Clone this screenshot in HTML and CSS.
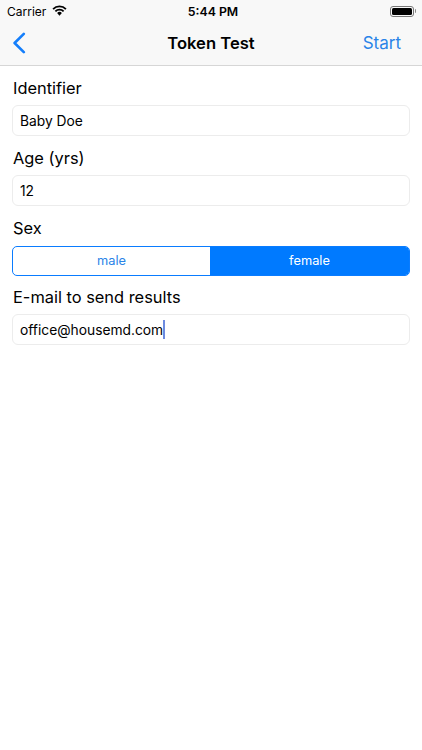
FILE: index.html
```html
<!DOCTYPE html>
<html lang="en">
<head>
<meta charset="utf-8">
<title>Token Test</title>
<link rel="stylesheet" href="styles.css">
</head>
<body>
<header class="chrome">
  <div class="status">
    <div class="status-left">
      <span>Carrier</span>
      <svg class="wifi" viewBox="0 0 16 12" width="15" height="11"><path d="M8 11.6 5.4 8.8a3.6 3.6 0 0 1 5.2 0Z" fill="#000"/><path d="M3.5 6.9a6.3 6.3 0 0 1 9 0" fill="none" stroke="#000" stroke-width="2"/><path d="M1 4.4a9.8 9.8 0 0 1 14 0" fill="none" stroke="#000" stroke-width="2"/></svg>
    </div>
    <div class="status-time">5:44 PM</div>
    <div class="status-right">
      <span class="battery"><span class="battery-fill"></span></span><span class="battery-cap"></span>
    </div>
  </div>
  <nav class="nav">
    <div class="nav-left">
      <svg class="back" viewBox="0 0 14 22" width="14" height="22"><path d="M11.8 1.8 2.6 11l9.2 9.2" fill="none" stroke="#147efb" stroke-width="2.6" stroke-linecap="round" stroke-linejoin="round"/></svg>
    </div>
    <h1 class="title">Token Test</h1>
    <div class="nav-right"><span class="start">Start</span></div>
  </nav>
</header>
<main class="form">
  <div class="label">Identifier</div>
  <div class="field">Baby Doe</div>
  <div class="label">Age (yrs)</div>
  <div class="field">12</div>
  <div class="label">Sex</div>
  <div class="segments">
    <div class="seg">male</div>
    <div class="seg seg-on">female</div>
  </div>
  <div class="label">E-mail to send results</div>
  <div class="field">office@housemd.com<span class="caret"></span></div>
</main>
</body>
</html>
```
FILE: styles.css
```css
* { box-sizing: border-box; }
html, body { margin: 0; padding: 0; }
body {
  width: 422px;
  height: 750px;
  overflow: hidden;
  background: #fff;
  color: #000;
  font-family: Inter, "Liberation Sans", sans-serif;
}
.chrome {
  height: 66px;
  background: #f8f8f8;
  border-bottom: 1px solid #d6d6d6;
}
.status {
  height: 21px;
  padding: 1px 7px 0;
  display: grid;
  grid-template-columns: 1fr auto 1fr;
  align-items: center;
  font-size: 12px;
}
.status-left { display: flex; align-items: center; gap: 6px; }
.wifi { margin-top: -2px; }
.status-time { font-weight: 600; font-size: 12.3px; margin-left: 4px; }
.status-right { display: flex; justify-content: flex-end; align-items: center; margin-right: -1px; }
.battery {
  width: 24px;
  height: 11px;
  border: 1px solid #777;
  border-radius: 3px;
  padding: 1px;
  display: flex;
}
.battery-fill { flex: 1; background: #000; border-radius: 1.5px; }
.battery-cap { width: 1.5px; height: 4px; background: #888; margin-left: 1px; border-radius: 0 1px 1px 0; }
.nav {
  height: 44px;
  padding: 0 21px 0 12px;
  display: grid;
  grid-template-columns: 1fr auto 1fr;
  align-items: center;
}
.nav-left { display: flex; align-items: center; }
.nav-right { display: flex; justify-content: flex-end; }
.title {
  margin: 0 0 0 9px;
  font-size: 16.6px;
  font-weight: 600;
}
.start { color: #2a84e8; font-size: 17px; }
.form {
  padding: 10px 12px 0 12px;
  display: flex;
  flex-direction: column;
}
.label {
  font-size: 16.4px;
  line-height: 24px;
  margin-bottom: 5px;
  padding-left: 1px;
}
.field {
  height: 31px;
  border: 1px solid #ececec;
  border-radius: 6px;
  margin-bottom: 10px;
  padding-left: 7px;
  font-size: 13.8px;
  display: flex;
  align-items: center;
}
.caret {
  width: 2px;
  height: 19px;
  background: #6d8be0;
  display: inline-block;
}
.segments {
  height: 30px;
  margin-top: 1px;
  display: grid;
  grid-template-columns: 197px 1fr;
  border: 1px solid #0a7cff;
  border-radius: 5px;
  overflow: hidden;
  margin-bottom: 9px;
}
.seg {
  text-align: center;
  font-size: 12.8px;
  line-height: 27px;
  color: #2a84e8;
}
.seg-on { background: #007aff; color: #fff; }
```
